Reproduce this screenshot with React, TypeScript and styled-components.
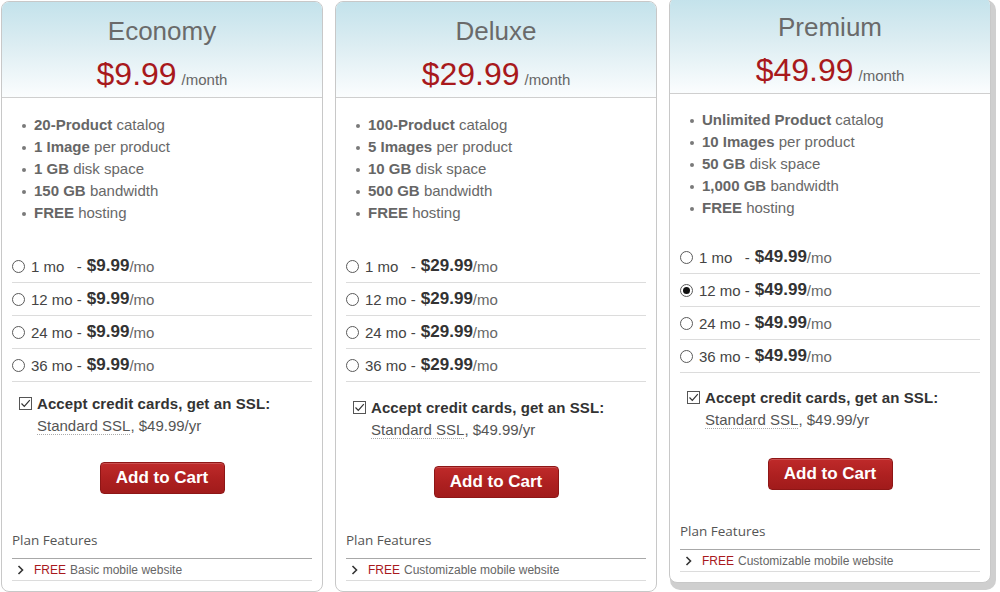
import React from "react";
import styled, { createGlobalStyle } from "styled-components";

type Gaps = { list: number; rows: number; ssl: number; button: number; plan: number };

type Plan = {
    name: string;
    price: string;
    features: [string, string][];
    checked: number;
    mobile: string;
    featured?: boolean;
    gaps: Gaps;
};

const plans: Plan[] = [
    {
        name: "Economy",
        price: "$9.99",
        features: [
            ["20-Product", "catalog"],
            ["1 Image", "per product"],
            ["1 GB", "disk space"],
            ["150 GB", "bandwidth"],
            ["FREE", "hosting"],
        ],
        checked: -1,
        mobile: "Basic mobile website",
        gaps: { list: 16, rows: 26, ssl: 11, button: 26, plan: 36 },
    },
    {
        name: "Deluxe",
        price: "$29.99",
        features: [
            ["100-Product", "catalog"],
            ["5 Images", "per product"],
            ["10 GB", "disk space"],
            ["500 GB", "bandwidth"],
            ["FREE", "hosting"],
        ],
        checked: -1,
        mobile: "Customizable mobile website",
        gaps: { list: 16, rows: 26, ssl: 15, button: 26, plan: 32 },
    },
    {
        name: "Premium",
        price: "$49.99",
        features: [
            ["Unlimited Product", "catalog"],
            ["10 Images", "per product"],
            ["50 GB", "disk space"],
            ["1,000 GB", "bandwidth"],
            ["FREE", "hosting"],
        ],
        checked: 1,
        mobile: "Customizable mobile website",
        featured: true,
        gaps: { list: 15, rows: 22, ssl: 14, button: 28, plan: 31 },
    },
];

const terms = ["1 mo\u00a0\u00a0\u00a0-", "12 mo -", "24 mo -", "36 mo -"];

export default function App() {
    return (
        <>
            <GlobalStyle />
            <Page>
                {plans.map((plan) => (
                    <Card key={plan.name} $featured={plan.featured}>
                        <Header>
                            <Title>{plan.name}</Title>
                            <PriceLine>
                                <Price>{plan.price}</Price>
                                <PerMonth>/month</PerMonth>
                            </PriceLine>
                        </Header>
                        <Body>
                            <FeatureList $gap={plan.gaps.list}>
                                {plan.features.map(([bold, rest]) => (
                                    <Feature key={bold}>
                                        <b>{bold}</b> {rest}
                                    </Feature>
                                ))}
                            </FeatureList>

                            <Terms $gap={plan.gaps.rows}>
                                {terms.map((term, i) => (
                                    <TermRow key={term}>
                                        <Radio
                                            type="radio"
                                            name={plan.name}
                                            defaultChecked={i === plan.checked}
                                        />
                                        <TermLabel>{term}</TermLabel>
                                        <TermPrice>{plan.price}</TermPrice>
                                        <PerMo>/mo</PerMo>
                                    </TermRow>
                                ))}
                            </Terms>

                            <Ssl $gap={plan.gaps.ssl}>
                                <CheckBox>
                                    <svg width="11" height="11" viewBox="0 0 11 11">
                                        <polyline
                                            points="1.5,5.5 4.3,8.3 9.8,2.2"
                                            fill="none"
                                            stroke="#333"
                                            strokeWidth="1.2"
                                        />
                                    </svg>
                                </CheckBox>
                                <SslText>
                                    <SslTitle>Accept credit cards, get an SSL:</SslTitle>
                                    <SslOption>
                                        <Dotted>Standard SSL</Dotted>, $49.99/yr
                                    </SslOption>
                                </SslText>
                            </Ssl>

                            <CartButton $gap={plan.gaps.button}>Add to Cart</CartButton>

                            <PlanLabel $gap={plan.gaps.plan}>Plan Features</PlanLabel>
                            <PlanRow>
                                <svg width="7" height="10" viewBox="0 0 7 10">
                                    <polyline
                                        points="1.5,1 5.5,5 1.5,9"
                                        fill="none"
                                        stroke="#333"
                                        strokeWidth="1.6"
                                    />
                                </svg>
                                <Free>FREE</Free>
                                <span>{plan.mobile}</span>
                            </PlanRow>
                        </Body>
                    </Card>
                ))}
            </Page>
        </>
    );
}

const GlobalStyle = createGlobalStyle`
    html, body {
        margin: 0;
        padding: 0;
        background: #fff;
    }
    body {
        font-family: "Liberation Sans", Arial, sans-serif;
        overflow: hidden;
    }
`;

const Page = styled.div`
    display: flex;
    align-items: flex-start;
    gap: 12px;
    padding: 1px 0 0 1px;
`;

const Card = styled.div<{ $featured?: boolean }>`
    width: 322px;
    box-sizing: border-box;
    border: 1px solid #c8c8c8;
    border-radius: 8px;
    overflow: hidden;
    background: #fff;
    margin-top: ${(p) => (p.$featured ? "-4px" : "0")};
    box-shadow: ${(p) => (p.$featured ? "3px 5px 0 2px #cfcfcf" : "none")};
`;

const Header = styled.div`
    height: 95px;
    box-sizing: content-box;
    padding: 0;
    border-bottom: 1px solid #cfcfcf;
    background: linear-gradient(to bottom, #c3e2eb 0%, #dcedf2 45%, #fbfdfe 100%);
    text-align: center;
    display: flex;
    flex-direction: column;
    align-items: center;
`;

const Title = styled.div`
    margin-top: 14px;
    font-size: 26px;
    line-height: 30px;
    color: #6a6a6a;
`;

const PriceLine = styled.div`
    margin-top: 10px;
    display: flex;
    align-items: baseline;
    gap: 5px;
    height: 36px;
`;

const Price = styled.span`
    font-size: 32px;
    line-height: 36px;
    color: #a8191c;
`;

const PerMonth = styled.span`
    font-size: 15px;
    color: #666;
`;

const Body = styled.div`
    padding: 0 10px 10px;
    display: flex;
    flex-direction: column;
`;

const FeatureList = styled.ul<{ $gap: number }>`
    list-style: none;
    margin: ${(p) => p.$gap}px 0 0;
    padding: 0 0 0 22px;
`;

const Feature = styled.li`
    position: relative;
    font-size: 15px;
    line-height: 22px;
    color: #686868;

    &::before {
        content: "";
        position: absolute;
        left: -12px;
        top: 10px;
        width: 4px;
        height: 4px;
        border-radius: 50%;
        background: #7a7a7a;
    }

    b {
        color: #666;
    }
`;

const Terms = styled.div<{ $gap: number }>`
    margin-top: ${(p) => p.$gap}px;
    display: flex;
    flex-direction: column;
`;

const TermRow = styled.label`
    height: 32px;
    border-bottom: 1px solid #dcdcdc;
    display: flex;
    align-items: center;
    font-size: 15px;
    color: #444;
`;

const Radio = styled.input`
    appearance: none;
    margin: 0 6px 0 0;
    width: 13px;
    height: 13px;
    border: 1px solid #5a5a5a;
    border-radius: 50%;
    box-sizing: border-box;
    background: #fff;
    display: grid;
    place-items: center;

    &:checked::after {
        content: "";
        width: 7px;
        height: 7px;
        border-radius: 50%;
        background: #111;
    }
`;

const TermLabel = styled.span`
    white-space: pre;
    margin-right: 5px;
`;

const TermPrice = styled.b`
    font-size: 17px;
    color: #333;
`;

const PerMo = styled.span`
    color: #666;
`;

const Ssl = styled.div<{ $gap: number }>`
    margin-top: ${(p) => p.$gap}px;
    padding-left: 7px;
    display: flex;
    align-items: flex-start;
`;

const CheckBox = styled.span`
    width: 13px;
    height: 13px;
    margin: 4px 5px 0 0;
    box-sizing: border-box;
    border: 1px solid #555;
    background: #fff;
    display: grid;
    place-items: center;
    flex-shrink: 0;
`;

const SslText = styled.div`
    display: flex;
    flex-direction: column;
`;

const SslTitle = styled.div`
    font-size: 15px;
    line-height: 22px;
    font-weight: bold;
    color: #333;
    letter-spacing: 0.1px;
`;

const SslOption = styled.div`
    font-size: 15px;
    line-height: 21px;
    color: #555;
`;

const Dotted = styled.span`
    border-bottom: 1px dotted #aaa;
`;

const CartButton = styled.button<{ $gap: number }>`
    margin: ${(p) => p.$gap}px auto 0;
    width: 125px;
    height: 32px;
    padding: 0;
    border: 1px solid #8e1616;
    border-radius: 4px;
    background: linear-gradient(to bottom, #bf2a2a 0%, #ad2020 55%, #a11b1b 100%);
    box-shadow: inset 0 1px 0 rgba(255, 255, 255, 0.18);
    color: #fff;
    font-family: "Liberation Sans", Arial, sans-serif;
    font-size: 17px;
    font-weight: bold;
    cursor: pointer;
`;

const PlanLabel = styled.div<{ $gap: number }>`
    margin-top: ${(p) => p.$gap}px;
    padding-bottom: 8px;
    border-bottom: 1px solid #a8a8a8;
    font-family: "Open Sans", "Noto Sans", sans-serif;
    font-size: 13.5px;
    line-height: 20px;
    color: #555;
`;

const PlanRow = styled.div`
    height: 21px;
    border-bottom: 1px solid #dcdcdc;
    display: flex;
    align-items: center;
    padding-left: 5px;
    font-size: 12px;
    color: #666;

    svg {
        margin-right: 10px;
    }
`;

const Free = styled.span`
    color: #a8191c;
    margin-right: 4px;
`;
